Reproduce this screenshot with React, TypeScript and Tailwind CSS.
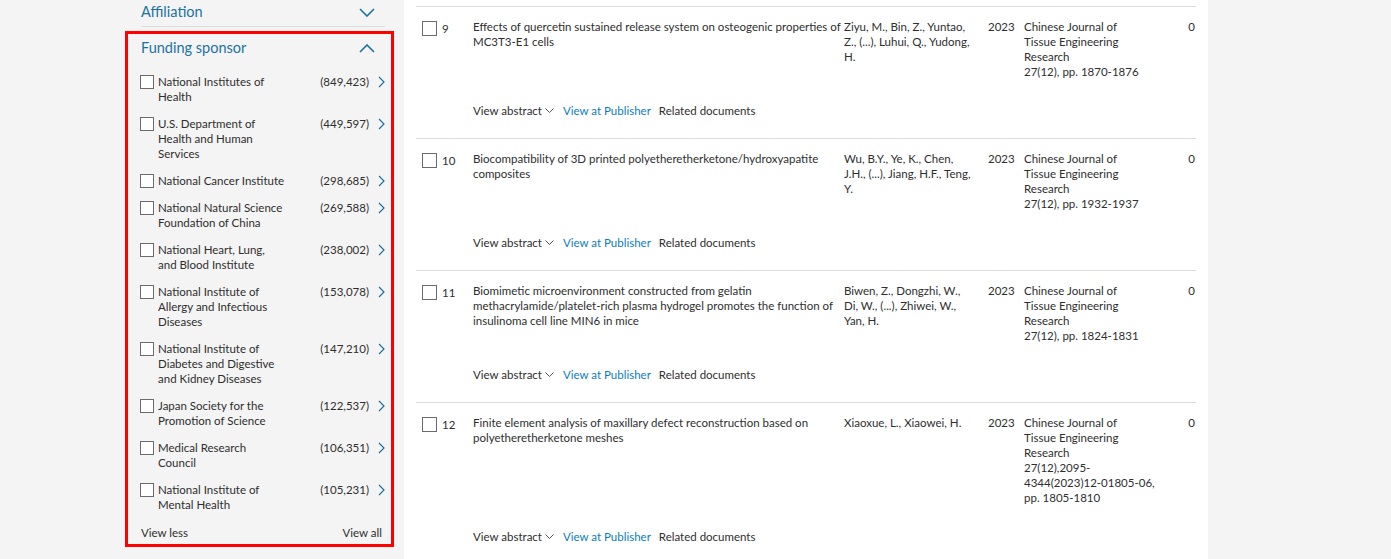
import React from "react";

const sponsors = [
  { lines: ["National Institutes of", "Health"], count: "(849,423)" },
  { lines: ["U.S. Department of", "Health and Human", "Services"], count: "(449,597)" },
  { lines: ["National Cancer Institute"], count: "(298,685)" },
  { lines: ["National Natural Science", "Foundation of China"], count: "(269,588)" },
  { lines: ["National Heart, Lung,", "and Blood Institute"], count: "(238,002)" },
  { lines: ["National Institute of", "Allergy and Infectious", "Diseases"], count: "(153,078)" },
  { lines: ["National Institute of", "Diabetes and Digestive", "and Kidney Diseases"], count: "(147,210)" },
  { lines: ["Japan Society for the", "Promotion of Science"], count: "(122,537)" },
  { lines: ["Medical Research", "Council"], count: "(106,351)" },
  { lines: ["National Institute of", "Mental Health"], count: "(105,231)" },
];

const journal = ["Chinese Journal of", "Tissue Engineering", "Research"];

const docs = [
  {
    n: 9,
    title: "Effects of quercetin sustained release system on osteogenic properties of MC3T3-E1 cells",
    authors: ["Ziyu, M., Bin, Z., Yuntao,", "Z., (...), Luhui, Q., Yudong,", "H."],
    pages: ["27(12), pp. 1870-1876"],
  },
  {
    n: 10,
    title: "Biocompatibility of 3D printed polyetheretherketone/hydroxyapatite composites",
    authors: ["Wu, B.Y., Ye, K., Chen,", "J.H., (...), Jiang, H.F., Teng,", "Y."],
    pages: ["27(12), pp. 1932-1937"],
  },
  {
    n: 11,
    title:
      "Biomimetic microenvironment constructed from gelatin methacrylamide/platelet-rich plasma hydrogel promotes the function of insulinoma cell line MIN6 in mice",
    authors: ["Biwen, Z., Dongzhi, W.,", "Di, W., (...), Zhiwei, W.,", "Yan, H."],
    pages: ["27(12), pp. 1824-1831"],
  },
  {
    n: 12,
    title: "Finite element analysis of maxillary defect reconstruction based on polyetheretherketone meshes",
    authors: ["Xiaoxue, L., Xiaowei, H."],
    pages: ["27(12),2095-", "4344(2023)12-01805-06,", "pp. 1805-1810"],
  },
];

function Chevron({ dir, className }: { dir: "up" | "down" | "right"; className?: string }) {
  if (dir === "right")
    return (
      <svg width="7" height="12" viewBox="0 0 7 12" className={className} fill="none" stroke="currentColor" strokeWidth="1.2">
        <polyline points="1,1 6,6 1,11" />
      </svg>
    );
  return (
    <svg width="16" height="9" viewBox="0 0 16 9" className={className} fill="none" stroke="currentColor" strokeWidth="1.6">
      <polyline points={dir === "down" ? "1,1 8,8 15,1" : "1,8 8,1 15,8"} />
    </svg>
  );
}

function Box({ size = "w-[14px] h-[14px]" }: { size?: string }) {
  return <span className={`block ${size} border border-[#6b6b6b] bg-white shrink-0`} />;
}

function Lines({ items }: { items: string[] }) {
  return (
    <span className="whitespace-nowrap">
      {items.map((l, i) => (
        <span key={i} className="block">
          {l}
        </span>
      ))}
    </span>
  );
}

export default function App() {
  return (
    <div
      className="min-h-[559px] bg-[#f4f4f4] flex pl-[125px] text-[#2e2e2e] overflow-hidden"
      style={{ fontFamily: "Lato, 'Noto Sans', sans-serif" }}
    >
      {/* filters */}
      <aside className="w-[269px] shrink-0">
        <div className="pl-4 pr-[9px] pt-[2px]">
          <div className="flex items-center justify-between h-5 pb-[4px] box-content border-b border-[#dcdcdc] text-[#1a72a0]">
            <span className="text-[14.5px]">Affiliation</span>
            <Chevron dir="down" className="mr-[10px]" />
          </div>
        </div>
        <div className="mt-[4px] border-[3px] border-[#ff0000] pl-[13px] pr-[6px] pt-[4px] pb-[4px]">
          <div className="flex items-center justify-between h-5 text-[#1a72a0]">
            <span className="text-[14.5px]">Funding sponsor</span>
            <Chevron dir="up" className="mr-[10px]" />
          </div>
          <ul className="mt-[16px] flex flex-col gap-3 text-[11.5px] leading-[15px]">
            {sponsors.map((s) => (
              <li key={s.count} className="flex items-start">
                <span className="pt-[1px] -ml-[1px]">
                  <Box />
                </span>
                <span className="ml-[4px] w-[140px]">
                  <Lines items={s.lines} />
                </span>
                <span className="flex-1 text-right">{s.count}</span>
                <Chevron dir="right" className="ml-[9px] mt-[2px] text-[#1a72a0]" />
              </li>
            ))}
          </ul>
          <div className="mt-[13px] flex justify-between text-[11.5px] leading-[15px] pr-[3px]">
            <span>View less</span>
            <span>View all</span>
          </div>
        </div>
      </aside>

      {/* results */}
      <main className="ml-[10px] w-[804px] shrink-0 bg-white px-3 pt-[6px] text-[11.5px] leading-[15px]">
        {docs.map((d) => (
          <div key={d.n} className="border-t border-[#dcdcdc] pt-3 pb-5">
            <div className="grid grid-cols-[21px_36px_371px_144px_36px_150px_1fr]">
              <span className="pl-[6px] pt-[2px]">
                <Box size="w-[15px] h-[15px]" />
              </span>
              <span className="pl-[5px] pt-[2px]">{d.n}</span>
              <span className="pr-[2px]">{d.title}</span>
              <Lines items={d.authors} />
              <span>2023</span>
              <Lines items={[...journal, ...d.pages]} />
              <span className="text-right pr-[1px]">0</span>
            </div>
            <div className="mt-6 ml-[57px] flex items-center">
              <span className="flex items-center gap-[3px]">
                View abstract
                <svg width="9" height="6" viewBox="0 0 9 6" fill="none" stroke="#555" strokeWidth="1">
                  <polyline points="0.5,0.5 4.5,4.5 8.5,0.5" />
                </svg>
              </span>
              <span className="ml-[9px] text-[#0c7dbb]">View at Publisher</span>
              <span className="ml-[8px]">Related documents</span>
            </div>
          </div>
        ))}
      </main>
    </div>
  );
}
